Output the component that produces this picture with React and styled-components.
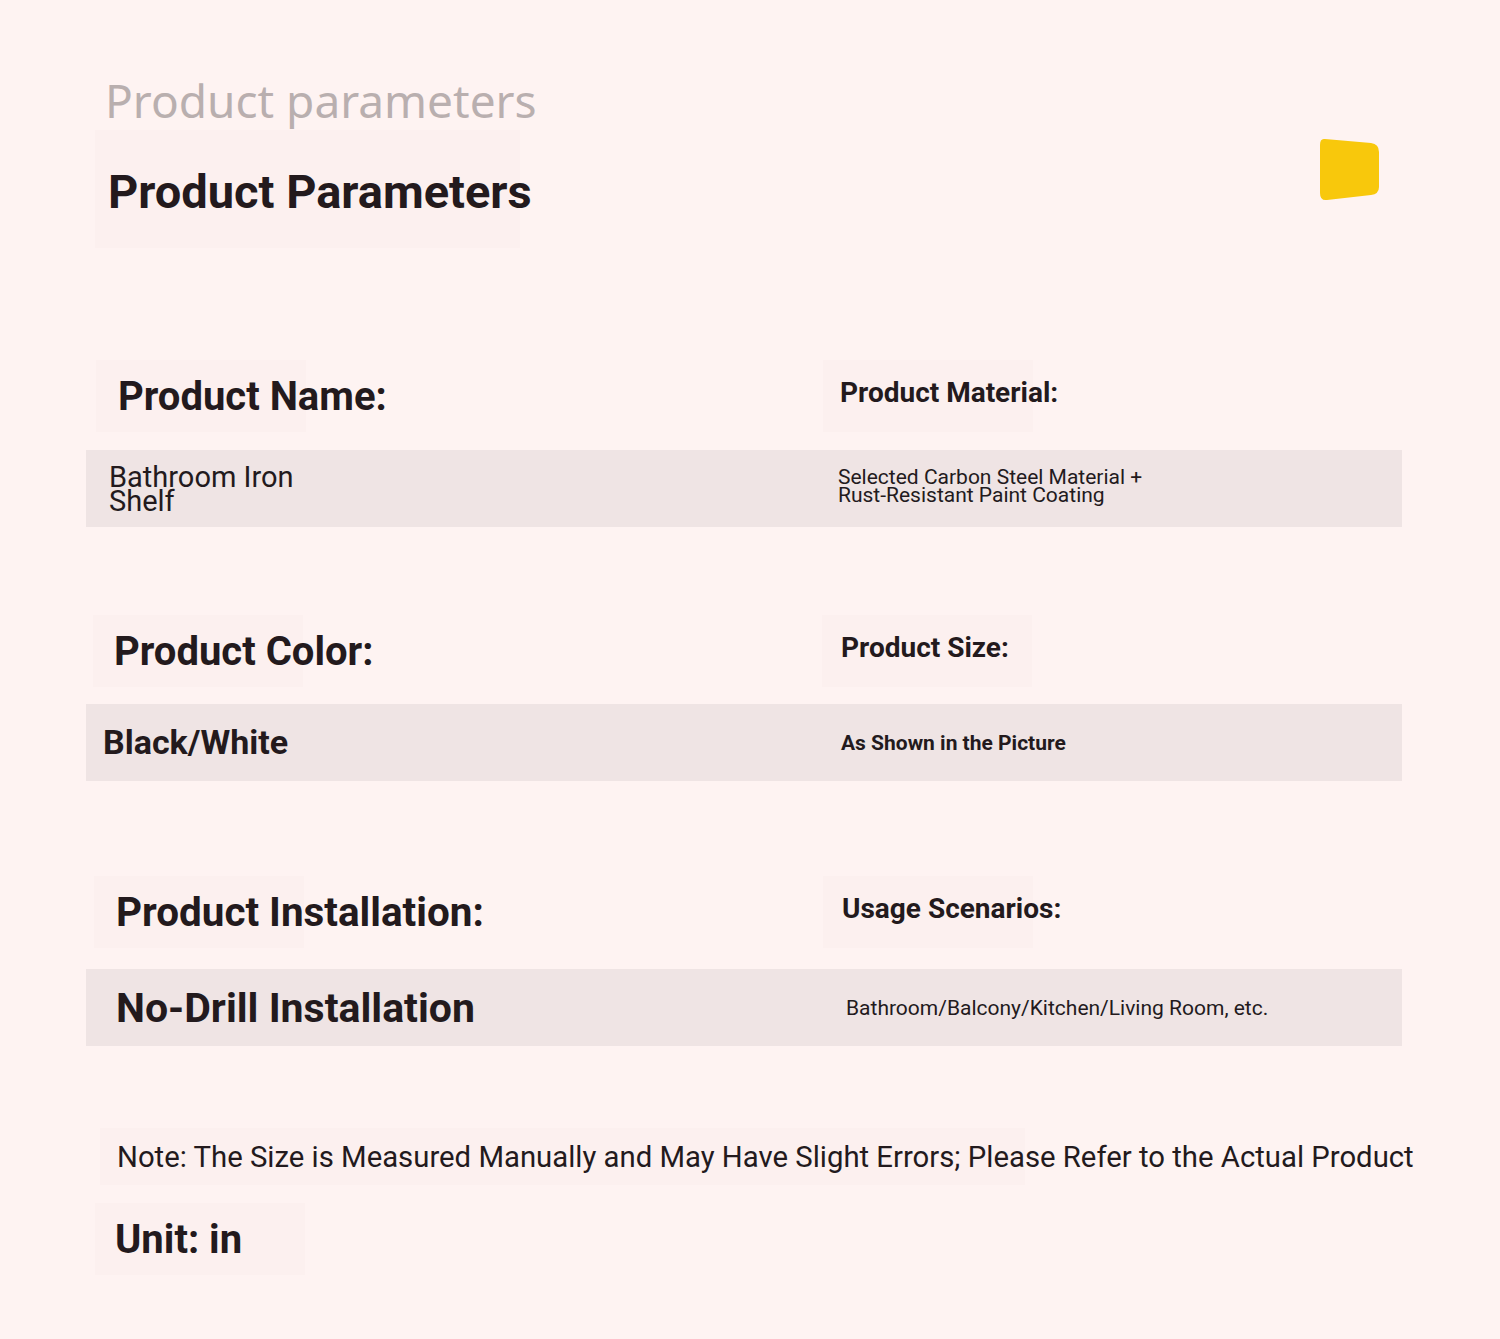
import React from 'react'
import styled, { createGlobalStyle } from 'styled-components'

const GlobalStyle = createGlobalStyle`
    html, body {
        margin: 0;
        padding: 0;
        background: #fef3f2;
    }
    body {
        font-family: Roboto, "Liberation Sans", sans-serif;
        color: #231a1d;
    }
`

const Page = styled.div`
    box-sizing: border-box;
    width: 1500px;
    min-height: 1339px;
    padding: 70px 98px 0 86px;
    background: #fef3f2;
`

const Header = styled.header`
    display: flex;
    justify-content: space-between;
    align-items: flex-start;
`

const Subtitle = styled.div`
    font-family: "Noto Sans", sans-serif;
    font-size: 46px;
    line-height: 60px;
    height: 60px;
    color: #b9afaf;
    padding-left: 19px;
    white-space: nowrap;
`

const TitleBox = styled.div`
    box-sizing: border-box;
    width: 425px;
    height: 118px;
    margin-left: 9px;
    padding: 4px 0 0 13px;
    display: flex;
    align-items: center;
    background: #fcf0ef;
`

const Title = styled.h1`
    margin: 0;
    font-size: 47px;
    font-weight: 700;
    white-space: nowrap;
`

const Badge = styled.svg`
    width: 62px;
    height: 64px;
    margin: 67px 21px 0 0;
`

const Section = styled.section`
    margin-top: ${p => p.$gap}px;
`

const Grid = styled.div`
    display: grid;
    grid-template-columns: 736px 1fr;
    align-items: center;
`

const LabelRow = styled(Grid)`
    height: 76px;
`

const LabelBox = styled.div`
    box-sizing: border-box;
    width: 210px;
    height: 72px;
    margin-left: ${p => p.$box}px;
    padding-left: ${p => p.$pad}px;
    padding-bottom: ${p => p.$lift || 0}px;
    display: flex;
    align-items: center;
    background: #fcf0ef;
`

const Band = styled(Grid)`
    height: 77px;
    margin-top: ${p => p.$gap}px;
    background: #efe4e4;
`

const Cell = styled.div`
    padding-left: ${p => p.$pad}px;
    padding-bottom: ${p => p.$lift || 0}px;
    display: flex;
    align-items: center;
`

const Text = styled.span`
    display: inline-block;
    font-size: ${p => p.$size}px;
    font-weight: ${p => p.$bold ? 700 : 400};
    line-height: ${p => p.$lh ? `${p.$lh}px` : 'normal'};
    white-space: nowrap;
`

const NoteBox = styled.div`
    box-sizing: border-box;
    width: 925px;
    height: 57px;
    margin: 82px 0 0 14px;
    padding-left: 17px;
    display: flex;
    align-items: center;
    background: #fcf0ef;
`

const UnitBox = styled(NoteBox)`
    width: 210px;
    height: 72px;
    margin: 18px 0 0 9px;
    padding-left: 20px;
`

const sections = [
    {
        gap: 110, bandGap: 16,
        left: { box: 10, pad: 22, text: 'Product Name:', size: 40 },
        right: { box: 1, pad: 17, text: 'Product Material:', size: 28 },
        leftValue: { pad: 23, lines: ['Bathroom Iron', 'Shelf'], size: 29, lh: 24 },
        rightValue: { pad: 16, lines: ['Selected Carbon Steel Material +', 'Rust-Resistant Paint Coating'], size: 21, lh: 18, lift: 6 },
    },
    {
        gap: 86, bandGap: 15,
        left: { box: 7, pad: 21, text: 'Product Color:', size: 40 },
        right: { box: 0, pad: 19, text: 'Product Size:', size: 28 },
        leftValue: { pad: 17, lines: ['Black/White'], size: 34, bold: true, lift: 2 },
        rightValue: { pad: 19, lines: ['As Shown in the Picture'], size: 21, bold: true },
    },
    {
        gap: 93, bandGap: 19,
        left: { box: 8, pad: 22, text: 'Product Installation:', size: 40.4 },
        right: { box: 1, pad: 19, text: 'Usage Scenarios:', size: 28 },
        leftValue: { pad: 30, lines: ['No-Drill Installation'], size: 41, bold: true },
        rightValue: { pad: 24, lines: ['Bathroom/Balcony/Kitchen/Living Room, etc.'], size: 21 },
    },
]

const Label = ({ box, pad, text, size, lift }) => (
    <LabelBox $box={box} $pad={pad} $lift={lift}>
        <Text $size={size} $bold>{text}</Text>
    </LabelBox>
)

const Value = ({ pad, lines, size, lh, bold, lift }) => (
    <Cell $pad={pad} $lift={lift}>
        <Text $size={size} $lh={lh} $bold={bold}>
            {lines.map((l, i) => <div key={i}>{l}</div>)}
        </Text>
    </Cell>
)

export default function App() {
    return (
        <>
            <GlobalStyle />
            <Page>
                <Header>
                    <div>
                        <Subtitle>Product parameters</Subtitle>
                        <TitleBox>
                            <Title>Product Parameters</Title>
                        </TitleBox>
                    </div>
                    <Badge viewBox="0 0 62 64">
                        <path d="M6 2 L52 6 Q60 7 60 15 L60 50 Q60 57 52 58 L8 63 Q1 64 1 56 L1 8 Q1 1 6 2 Z" fill="#f8c80c" />
                    </Badge>
                </Header>

                {sections.map((s, i) => (
                    <Section key={i} $gap={s.gap}>
                        <LabelRow>
                            <Label {...s.left} />
                            <Label {...s.right} lift={8} />
                        </LabelRow>
                        <Band $gap={s.bandGap}>
                            <Value {...s.leftValue} />
                            <Value {...s.rightValue} />
                        </Band>
                    </Section>
                ))}

                <NoteBox>
                    <Text $size={29.3}>
                        Note: The Size is Measured Manually and May Have Slight Errors; Please Refer to the Actual Product
                    </Text>
                </NoteBox>
                <UnitBox>
                    <Text $size={40} $bold>Unit: in</Text>
                </UnitBox>
            </Page>
        </>
    )
}
